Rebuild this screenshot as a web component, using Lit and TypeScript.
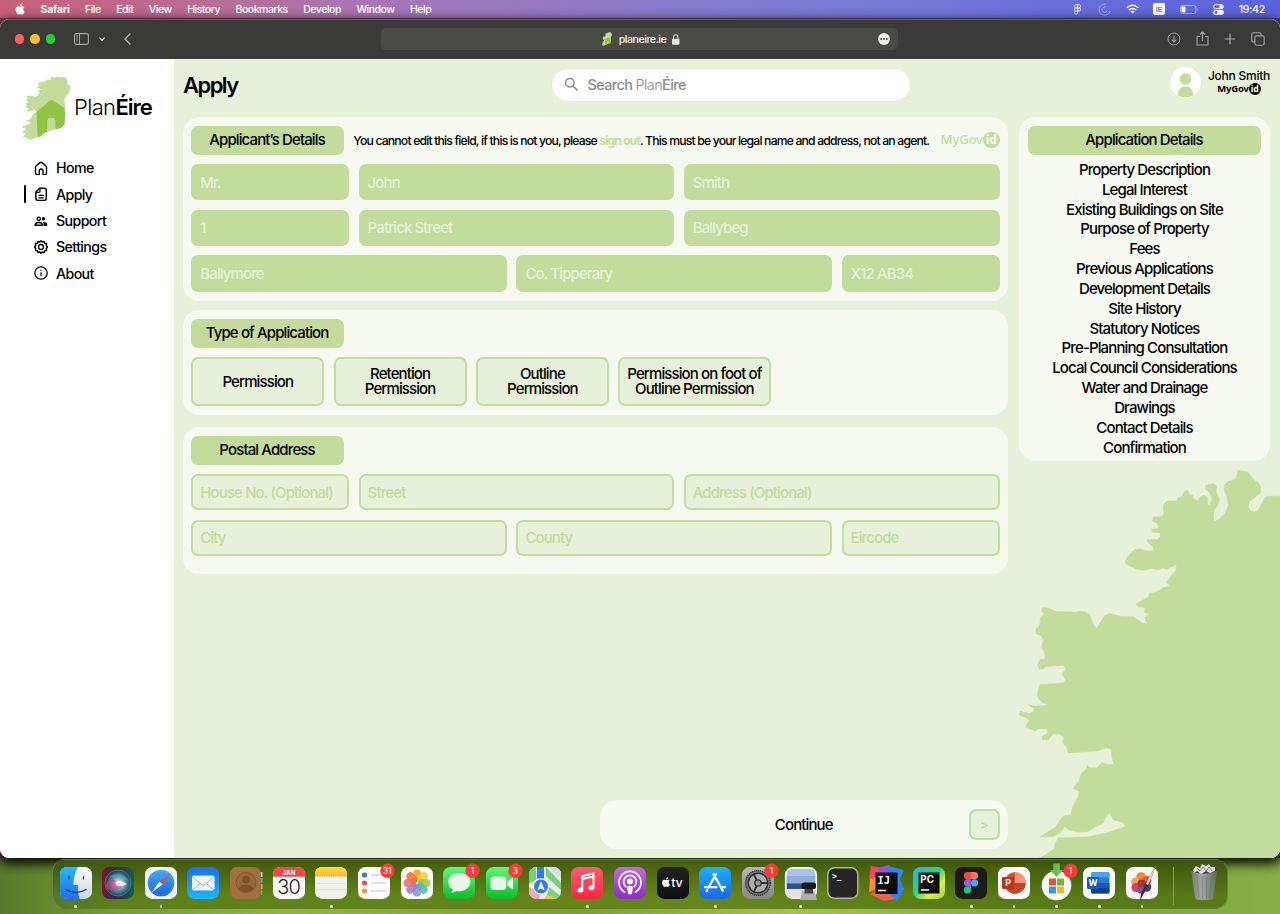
import { LitElement, html, svg, css, nothing } from "lit";
import { customElement } from "lit/decorators.js";
import { classMap } from "lit/directives/class-map.js";

const glyph = (w: number, h: number, body: unknown, box = `0 0 ${w} ${h}`) =>
  html`<svg class="glyph" width=${w} height=${h} viewBox=${box} fill="none">${body}</svg>`;

const applePath =
  "M8.2 2.6C8.7 2 9 1.200 8.900.4 8.200.4 7.400.9 6.900 1.500 6.500 2 6.100 2.800 6.200 3.500 7 3.600 7.700 3.200 8.200 2.600ZM8.900 3.800C7.800 3.700 6.900 4.400 6.300 4.400 5.800 4.400 5 3.800 4.100 3.800 2.900 3.800 1.800 4.500 1.200 5.500 0 7.600.9 10.700 2.100 12.400 2.700 13.200 3.300 14.100 4.200 14.100 5.100 14.100 5.400 13.500 6.400 13.500 7.500 13.500 7.700 14.100 8.600 14.100 9.500 14.100 10.100 13.200 10.700 12.400 11.400 11.500 11.600 10.600 11.700 10.600 11.600 10.600 9.800 9.900 9.800 7.800 9.800 6.100 11.200 5.300 11.300 5.200 10.500 4 9.300 3.900 8.900 3.800Z";

const coast =
  "M810 138L775 138 765 141 758 154 747 176 735 185 722 183 714 170 718 155 735 140 750 128 753 110 745 98 735 92 722 76 712 65 684 60 682 72 675 88 655 93 643 105 643 120 652 140 655 165 645 190 625 208 613 214 609 200 612 180 625 160 627 145 618 125 620 108 610 100 588 104 586 115 600 128 606 145 600 167 593 162 592 140 580 135 570 140 562 152 550 145 548 135 538 133 533 120 522 124 518 138 505 143 500 153 470 152 460 165 462 195 445 200 430 200 427 212 440 218 447 230 440 235 425 237 428 245 450 247 452 258 443 268 410 268 415 278 430 290 430 300 415 303 390 296 375 297 352 320 345 335 350 342 380 356 400 360 425 355 445 358 458 353 470 357 500 342 498 360 470 395 480 408 460 412 440 425 418 430 415 440 378 462 385 468 405 472 404 486 418 490 405 502 410 520 400 520 385 510 370 500 330 498 300 490 285 495 270 518 262 535 250 525 240 495 225 485 208 483 200 486 135 483 115 473 98 472 95 482 103 492 92 500 90 525 78 535 78 550 95 556 100 570 95 590 103 603 107 626 90 628 82 645 88 657 100 655 108 648 160 645 168 655 155 672 168 688 160 698 90 703 82 730 85 745 100 758 122 765 75 768 56 764 72 775 70 785 58 790 30 783 28 793 60 808 48 825 50 832 75 842 85 835 112 836 112 850 97 858 98 868 115 868 130 850 148 850 162 862 157 875 170 890 175 907 260 902 290 892 305 897 305 915 312 942 295 943 275 937 262 953 240 952 232 945 228 958 213 970 208 990 190 1015 208 1022 205 1040 190 1065 182 1093 160 1097 150 1110 140 1128 90 1160 130 1158 150 1148 165 1128 175 1138 205 1145 235 1143 250 1133 280 1118 288 1098 300 1087 310 1108 335 1115 348 1128 300 1145 235 1160 145 1163 135 1180 133 1195 105 1215 85 1224 810 1224Z";

const islandPath =
  "M152 53L163 56 166 52 180 55 190 52 198 60 199 74 206 80 208 90 203 100 196 108 190 118 192 135 192 190 178 203 150 210 128 218 113 228 92 237 85 232 77 234 80 228 68 228 78 218 66 215 80 205 66 200 88 190 90 184 76 182 92 175 98 162 110 155 104 150 84 154 80 150 88 146 76 140 82 136 76 130 86 128 78 120 84 116 78 110 96 108 106 112 112 108 118 98 112 94 126 90 110 84 118 78 112 72 124 68 134 66 142 60 148 64Z";

const island = (w: number, h: number) =>
  glyph(
    w,
    h,
    svg`<path fill="#c3db9b" d=${islandPath}/>
      <path fill="#8fc447" d="M109 155L148 123Q153 119 158 123L188 143Q194 152 192 168L190 192 180 203 164 205 164 182Q163 172 152 172 141 172 140 182L140 212 127 220 122 226 112 229Z"/>`,
    "64 48 148 192",
  );

const navIcons: Record<string, unknown> = {
  Home: svg`<path d="M5.300 13.600H3.200Q1.500 13.600 1.500 12V6.200Q1.500 5.300 2.200 4.700L6 1.600Q7 .8 8 1.600L11.800 4.700Q12.500 5.300 12.500 6.200V12Q12.500 13.600 10.800 13.600H9V9.800Q9 8 7.100 8 5.300 8 5.300 9.800Z" stroke="#000" stroke-width="1.400" stroke-linejoin="round"/>`,
  Apply: svg`<path d="M5.500 1.300H10.200Q12.300 1.300 12.300 3.400V11.300Q12.300 13.400 10.200 13.400H4Q1.900 13.400 1.900 11.300V5Z" stroke="#000" stroke-width="1.500" stroke-linejoin="round"/><path d="M6 1.500V4.200Q6 5.300 4.900 5.300H2M4.500 8.300H9.800M4.500 10.800H9.800" stroke="#000" stroke-width="1.300"/>`,
  Support: svg`<circle cx="4.800" cy="4.800" r="1.700" stroke="#000" stroke-width="1.300"/><circle cx="9.500" cy="4.800" r="1.700" fill="#000"/><path d="M1.300 11.300V10.400Q1.800 8.500 4.800 8.500T8.300 10.400V11.300Z" stroke="#000" stroke-width="1.500"/><path d="M8.800 7.900Q12.800 7.800 13.200 10.300V12H9.600V10.300Q9.600 8.800 8.800 7.900Z" fill="#000"/>`,
  Settings: svg`<path d="M7 .8L8.300 2 10 1.500 10.700 3.200 12.500 3.500 12.300 5.400 13.500 7 12.300 8.500 12.500 10.400 10.700 10.800 10 12.500 8.300 12 7 13.200 5.700 12 4 12.500 3.300 10.800 1.500 10.400 1.700 8.500 .5 7 1.700 5.400 1.500 3.500 3.300 3.200 4 1.500 5.700 2Z" stroke="#000" stroke-width="1.500" stroke-linejoin="round"/><circle cx="7" cy="7" r="2.500" stroke="#000" stroke-width="1.300"/>`,
  About: svg`<circle cx="7" cy="7" r="6.200" stroke="#000" stroke-width="1.300"/><path d="M7 6.200V10.300M7 3.700V5" stroke="#000" stroke-width="1.200"/>`,
};

const tile = (fill: string) => svg`<rect width="32" height="32" rx="7.300" fill=${fill}/>`;
const grad = (id: string, a: string, b: string) =>
  svg`<linearGradient id=${id} x2="0" y2="1"><stop stop-color=${a}/><stop offset="1" stop-color=${b}/></linearGradient>`;

interface DockApp {
  name: string;
  art: unknown;
  open?: boolean;
  badge?: string;
}

const petals = ["#f6a01a", "#e9d02d", "#9ccb4c", "#56b99c", "#6e9fdc", "#a57cc5", "#e06b86", "#f0703c"];

const apps: DockApp[] = [
  {
    name: "Finder",
    open: true,
    art: svg`<defs>${grad("fa", "#27b8fb", "#1f6ff0")}${grad("fb", "#fafbfc", "#cdd6e2")}</defs>${tile("url(#fb)")}
      <path d="M7.300 0H18Q13.500 8 13.300 18H18Q17.800 26 19.500 32H7.300Q0 32 0 24.700V7.300Q0 0 7.300 0Z" fill="url(#fa)"/>
      <path d="M9 9.500V12M23.500 9.500V12M6 22.500Q16 28.500 26 22.500" stroke="#17304f" stroke-width="1.200" stroke-linecap="round"/>`,
  },
  {
    name: "Siri",
    art: svg`<defs><radialGradient id="sa" cx=".52" cy=".52" r=".5"><stop stop-color="#fff"/><stop offset=".3" stop-color="#c3b6dc"/><stop offset=".65" stop-color="#3a8494"/><stop offset="1" stop-color="#2c3a52"/></radialGradient>
      <linearGradient id="sb"><stop stop-color="#7c1637"/><stop offset=".45" stop-color="#30284a"/><stop offset="1" stop-color="#126055"/></linearGradient></defs>${tile("url(#sb)")}
      <circle cx="16" cy="16" r="13" fill="url(#sa)" stroke="#5d8795" stroke-width=".7"/>
      <path d="M4 17Q8 8 16 15T13 23T4 17Z" fill="#d9356f" opacity=".55"/><path d="M7 10Q18 2 27 14Q18 10 7 10Z" fill="#4dd2c1" opacity=".35"/><path d="M13 15Q18 12 25 17Q20 20 15 19Z" fill="#fff" opacity=".8"/>`,
  },
  {
    name: "Safari",
    open: true,
    art: svg`<defs>${grad("sc", "#45a9f5", "#1866d8")}</defs>${tile("#f3f5f8")}<circle cx="16" cy="16" r="13.300" fill="url(#sc)"/>
      <circle cx="16" cy="16" r="11.800" stroke="#b8dbfb" stroke-width=".7" stroke-dasharray=".4 1.400"/>
      <path d="M25.500 6.500L14.500 14.500 17.500 17.500Z" fill="#e9433f"/><path d="M6.500 25.500L14.500 14.500 17.500 17.500Z" fill="#eef3f8"/>`,
  },
  {
    name: "Mail",
    art: svg`<defs>${grad("ma", "#1d6df2", "#19b8fb")}</defs>${tile("url(#ma)")}<rect x="5" y="8.500" width="22.500" height="15" rx="2" fill="#f0f3f7"/>
      <path d="M5.500 9.500L14.500 17.500Q16.200 19 18 17.500L27 9.500M5.500 23L13.200 16.500M27 23L19.300 16.500" stroke="#96a7ba" stroke-width=".8"/>`,
  },
  {
    name: "Contacts",
    art: svg`<path d="M30 5h2.500v5H30z" fill="#c9cfc6"/><path d="M30 11h2.500v5H30z" fill="#48b6a8"/><path d="M30 17h2.500v5H30z" fill="#e2a43c"/><path d="M30 23h2.500v5H30z" fill="#5bb34b"/>
      <rect width="31" height="32" rx="7" fill="#a0713f"/><circle cx="16" cy="15.500" r="10" fill="#966a38" stroke="#7b5327" stroke-width=".8"/><circle cx="16" cy="12.500" r="3.800" fill="#7a5127"/><path d="M8.500 22Q11 17.800 16 17.800T23.500 22Q16 28 8.500 22Z" fill="#7a5127"/>`,
  },
  {
    name: "Calendar",
    art: svg`${tile("#fafafa")}<path d="M0 9.800V7.300Q0 0 7.300 0H24.700Q32 0 32 7.300V9.800Z" fill="#ee4a41"/>
      <text x="16" y="7.900" text-anchor="middle" class="jan">JAN</text><text x="15.700" y="27" text-anchor="middle" class="day">30</text>`,
  },
  {
    name: "Notes",
    open: true,
    art: svg`<defs>${grad("na", "#ffd84a", "#f9c11f")}</defs>${tile("#f2f2ec")}<path d="M0 9V7.300Q0 0 7.300 0H24.700Q32 0 32 7.300V9Z" fill="url(#na)"/>
      <path d="M0 9.700H32" stroke="#b49a50" stroke-width=".6" stroke-dasharray="1 .8"/><path d="M2 16.500H30M2 22.500H30" stroke="#d8d8d2" stroke-width=".6"/>`,
  },
  {
    name: "Reminders",
    badge: "31",
    art: svg`${tile("#fdfdfd")}<circle cx="6.500" cy="8" r="2.600" fill="#3478f6"/><circle cx="6.500" cy="16" r="2.600" fill="#ea4c46"/><circle cx="6.500" cy="24" r="2.600" fill="#f29a38"/>
      <path d="M13 8H28M13 16H28.500M13 24H28.500" stroke="#bcbcbc" stroke-width=".9"/>`,
  },
  {
    name: "Photos",
    art: svg`${tile("#fcfcfa")}${petals.map(
      (c, i) => svg`<rect x="12" y="2.500" width="8" height="12.500" rx="4" fill=${c} opacity=".88" transform="rotate(${i * 45} 16 16)"/>`,
    )}`,
  },
  {
    name: "Messages",
    badge: "1",
    art: svg`<defs>${grad("me", "#5ff777", "#0bbd2a")}</defs>${tile("url(#me)")}<path d="M16.300 6C22.800 6 27.500 10 27.500 15S22.800 24.200 16.300 24.200Q14.800 24.200 13.200 23.900 11 25.600 8.300 25.500 9.800 24.200 9.900 22.500 5.200 19.800 5.200 15C5.200 10 9.800 6 16.300 6Z" fill="#e9f7e8"/>`,
  },
  {
    name: "FaceTime",
    badge: "3",
    art: svg`<defs>${grad("ft", "#5ff777", "#0bbd2a")}</defs>${tile("url(#ft)")}<rect x="4.500" y="9.500" width="15.800" height="13.500" rx="3.500" fill="#eaf8ea"/><path d="M21.500 14.500L26 11Q27 10.500 27 11.500V21.500Q27 22.500 26 22L21.500 18.500Z" fill="#eaf8ea"/>`,
  },
  {
    name: "Maps",
    art: svg`<defs><clipPath id="mp"><rect width="32" height="32" rx="7.300"/></clipPath></defs><g clip-path="url(#mp)"><path d="M0 0H32V32H0Z" fill="#eeece3"/><path d="M0 0H7V13L0 17ZM17 0L32 16V23L17 9Z" fill="#73d27c"/><path d="M20 0L32 12V0Z" fill="#d9dde0"/><path d="M0 20L12 26 10 32H0Z" fill="#f2a6c0"/><path d="M20 20L32 29V32H17Z" fill="#79d17b"/><path d="M17 28L32 32H15Z" fill="#f4cb45"/><path d="M8 0H15V14H8Z" fill="#2f7ff0"/></g>
      <circle cx="12" cy="19.500" r="7.600" fill="#2e7cf0" stroke="#f5f9ff" stroke-width="1.200"/><path d="M12 14L15.700 23.500 12 21.500 8.300 23.500Z" fill="#fff"/>`,
  },
  {
    name: "Music",
    open: true,
    art: svg`<defs>${grad("mu", "#fb5b71", "#fa2742")}</defs>${tile("url(#mu)")}<path d="M11.300 22.500V9L22.500 6.500V20.500M11.300 12L22.500 9.500" stroke="#fff" stroke-width="2"/><ellipse cx="9.300" cy="23" rx="3" ry="2.500" fill="#fff"/><ellipse cx="20.500" cy="20.800" rx="3" ry="2.500" fill="#fff"/>`,
  },
  {
    name: "Podcasts",
    art: svg`<defs>${grad("po", "#c268e2", "#8a2fc4")}</defs>${tile("url(#po)")}<g stroke="#fff" stroke-width="1.700" stroke-linecap="round"><path d="M10.500 25A11 11 0 1 1 21.500 25"/><path d="M11.800 19.600A6.400 6.400 0 1 1 20.200 19.600"/></g><circle cx="16" cy="14.500" r="2.900" fill="#fff"/><path d="M13 20Q16 17.500 19 20L18 26.500Q16 28.500 14 26.500Z" fill="#fff"/>`,
  },
  {
    name: "TV",
    art: svg`<defs>${grad("tv", "#1f2321", "#0d100f")}</defs>${tile("url(#tv)")}<path transform="translate(4.600 9.900) scale(.72)" fill="#fff" d=${applePath}/><text x="14.300" y="20" class="tv">tv</text>`,
  },
  {
    name: "App Store",
    open: true,
    art: svg`<defs>${grad("as", "#1cb0f8", "#1b67ea")}</defs>${tile("url(#as)")}<g stroke="#fff" stroke-width="2.300" stroke-linecap="round"><path d="M17.300 7L9.300 20.500M14.500 7L23.700 23.500M6 20.200H17.500M22.500 20.200H26M8.200 23.200L7.800 24"/></g>`,
  },
  {
    name: "System Settings",
    badge: "1",
    art: svg`<defs>${grad("ss", "#b4b7b4", "#858884")}</defs>${tile("url(#ss)")}<circle cx="16" cy="16" r="12.400" fill="#777a78" stroke="#30332f" stroke-width="1.400" stroke-dasharray="1.300 .7"/><circle cx="16" cy="16" r="9.800" fill="#adafad" stroke="#2d302d" stroke-width="1.400"/><path d="M16 16L12 7.500M16 16H25.500M16 16L12 24.500" stroke="#2d302d" stroke-width="1.800"/><circle cx="16" cy="16" r="3.200" fill="#959895" stroke="#2d302d" stroke-width="1.300"/>`,
  },
  {
    name: "Preview",
    open: true,
    art: svg`<rect x=".8" y=".8" width="30.400" height="30.400" rx="7" fill="#a9c3ea" stroke="#f4f4f2" stroke-width="1.800"/><path d="M1.800 9H30.200V17H1.800Z" fill="#8faede"/><path d="M1.800 16.500H30.200V22H1.800Z" fill="#2c5285"/><path d="M1.800 22H30.200V25Q30 30.200 25 30.200H7Q2 30 1.800 25Z" fill="#e4e2dc"/>
      <path d="M17 24H29.500L32 33H15Z" fill="#aeb0ae"/><rect x="16.500" y="15.500" width="14.500" height="6.500" rx="2.500" fill="#17181a"/><path d="M19.500 22H28V26.500H19.500Z" fill="#3f4244"/>`,
  },
  {
    name: "Terminal",
    art: svg`<rect x=".8" y=".8" width="30" height="30.400" rx="6.500" fill="#242626" stroke="#aeb3a8" stroke-width="1.500"/><text x="5" y="11.500" class="term">&gt;_</text>`,
  },
  {
    name: "IntelliJ IDEA",
    art: svg`<path d="M1-1L14 1 12 16 0 26 3 16-1 12Z" fill="#f8465f"/><path d="M8 1L19-2 30 12 20 28 10 30Z" fill="#b04bd4"/><path d="M18-1L34 3 30 12 34 22 27 34 18 27Z" fill="#2c83f5"/><path d="M0 27L12 20 25 32 14 34Z" fill="#f4614a"/><path d="M0 12L7 10V22L-1 25Z" fill="#fa8d33"/><path d="M5.500 5.500H27.500V27H5.500Z" fill="#0b0b0d"/><text x="7.500" y="16.500" class="ij">IJ</text><path d="M8 23.500H16" stroke="#fff" stroke-width="1.600"/>`,
  },
  {
    name: "PyCharm",
    art: svg`<defs><linearGradient id="pc" y2="1"><stop stop-color="#1fb7e8"/><stop offset=".45" stop-color="#29d287"/><stop offset=".7" stop-color="#e6ec41"/><stop offset="1" stop-color="#8ada50"/></linearGradient></defs>${tile("url(#pc)")}<path d="M5.500 5.500H26.500V26.500H5.500Z" fill="#0c0d0c"/><text x="7.300" y="16.300" class="pc">PC</text><path d="M8 23H16" stroke="#fff" stroke-width="1.500"/>`,
  },
  {
    name: "Figma",
    open: true,
    art: svg`${tile("#1c1b1a")}<path d="M16 5H12.500A3.600 3.600 0 0 0 12.500 12.200H16Z" fill="#f0502c"/><path d="M16 5H19.500A3.600 3.600 0 0 1 19.500 12.200H16Z" fill="#fb7265"/><path d="M16 12.200H12.500A3.600 3.600 0 0 0 12.500 19.400H16Z" fill="#9a58f6"/><circle cx="19.600" cy="15.800" r="3.600" fill="#28b6f7"/><path d="M16 19.400H12.500A3.600 3.600 0 1 0 16 23Z" fill="#17cb83"/>`,
  },
  {
    name: "PowerPoint",
    open: true,
    art: svg`${tile("#fbfaf8")}<circle cx="17" cy="16" r="10.700" fill="#d35230"/><path d="M17 5.300A10.700 10.700 0 0 1 27.700 16H17Z" fill="#ff9478"/><path d="M6.300 16H27.700A10.700 10.700 0 0 1 6.300 16Z" fill="#c3411f" opacity=".8"/><rect x="4" y="10" width="12" height="12" rx="1.300" fill="#b93519"/><text x="10" y="19.300" text-anchor="middle" class="ms">P</text>`,
  },
  {
    name: "Microsoft AutoUpdate",
    open: true,
    badge: "1",
    art: svg`<circle cx="15.500" cy="18.500" r="14.800" fill="#fbfbfa"/><path d="M8 11.500H15V18.500H8Z" fill="#ee5030"/><path d="M16 11.500H23V18.500H16Z" fill="#7db728"/><path d="M8 19.500H15V26.500H8Z" fill="#23a3ea"/><path d="M16 19.500H23V26.500H16Z" fill="#fbb826"/><path d="M12.300-3.500H18.800V3H22L15.500 10 9 3H12.300Z" fill="#6dbb58"/>`,
  },
  {
    name: "Word",
    open: true,
    art: svg`${tile("#fbfbfb")}<rect x="8" y="5" width="18.500" height="21.500" rx="1.500" fill="#2b7cd3"/><path d="M8 6.500Q8 5 9.500 5H25Q26.500 5 26.500 6.500V10.500H8Z" fill="#41a5ee"/><path d="M8 16H26.500V21H8Z" fill="#185abd"/><path d="M8 21H26.500V25Q26.500 26.500 25 26.500H9.500Q8 26.500 8 25Z" fill="#103f91"/><rect x="4" y="10" width="12" height="12" rx="1.300" fill="#1c58b4"/><text x="10" y="19.200" text-anchor="middle" class="ms">W</text>`,
  },
  {
    name: "Pixelmator Pro",
    open: true,
    art: svg`${tile("#f5f4f6")}<circle cx="15" cy="10" r="4.800" fill="#f5862a"/><circle cx="21" cy="13.500" r="4.500" fill="#e4552f"/><circle cx="9.500" cy="15" r="4.300" fill="#f0a24d"/><circle cx="10" cy="20.500" r="4.600" fill="#d34460"/><circle cx="20.500" cy="20" r="4.800" fill="#39456f"/><circle cx="15" cy="22.500" r="4.300" fill="#8a4b9d"/><circle cx="15.500" cy="16.500" r="4" fill="#9f3240"/>
      <path d="M30-1L24 14 17 28 14 34 15 27 22 12Z" fill="#2c2b31"/><path d="M30-1L24 14 22 18 20 17 22 12Z" fill="#d8d9dc"/>`,
  },
];

@customElement("mygov-mark")
export class MyGovMark extends LitElement {
  static styles = css`
    :host {
      display: inline-flex;
      align-items: center;
      font-family: "Noto Sans", "Open Sans", sans-serif;
      font-weight: 600;
      line-height: 1;
    }
    .disc {
      width: 1.27em;
      height: 1.27em;
      border-radius: 50%;
      background: currentColor;
      display: grid;
      place-items: center;
    }
    .id {
      color: var(--knock, #e7f1da);
      font-weight: 800;
      font-size: 0.92em;
      letter-spacing: -0.02em;
    }
  `;
  render() {
    return html`<span>MyGov</span><span class="disc"><span class="id">id</span></span>`;
  }
}

@customElement("mac-menubar")
export class MacMenubar extends LitElement {
  static styles = css`
    :host {
      display: flex;
      justify-content: space-between;
      align-items: center;
      box-sizing: border-box;
      height: 18px;
      padding: 0 15px;
      color: #fff;
      font: 500 10.600px Inter, sans-serif;
      background: linear-gradient(90deg, #c8607a, #b96d97 17%, #a776b6 29%, #8b7cca 50%, #767ad7 70%, #666edc 85%, #5a62dd);
    }
    .menus,
    .status {
      display: flex;
      align-items: center;
    }
    .menus {
      gap: 15.500px;
      letter-spacing: -0.530px;
    }
    .app {
      font-weight: 700;
      letter-spacing: -0.250px;
    }
    .status {
      gap: 14.500px;
      letter-spacing: -0.300px;
    }
    .status .glyph:first-child {
      margin-right: 3px;
    }
    .glyph {
      display: block;
    }
    .ie {
      font: 700 7px "Liberation Sans", sans-serif;
      letter-spacing: 0;
    }
  `;
  render() {
    return html`
      <div class="menus">
        ${glyph(10, 12, svg`<path fill="#fff" d=${applePath}/>`, "0 0 12 14.500")}
        <span class="app">Safari</span>
        ${["File", "Edit", "View", "History", "Bookmarks", "Develop", "Window", "Help"].map((m) => html`<span>${m}</span>`)}
      </div>
      <div class="status">
        ${glyph(7, 11, svg`<g stroke="#e9e9fb" stroke-width=".9"><path d="M3.500.6V8.800A1.500 1.500 0 1 1 2 7.200H5.500M3.500.6H2A1.600 1.600 0 0 0 2 3.900H5A1.600 1.600 0 0 0 5 .6H3.500M3.500 3.900H2A1.600 1.600 0 0 0 2 7.200"/><circle cx="5.200" cy="5.500" r="1.500"/></g>`)}
        ${glyph(13, 13, svg`<g stroke="#a3aaf0" stroke-width="1" stroke-linecap="round"><path d="M7 1A5.600 5.600 0 1 0 12 8.500M7.500 3.800A2.900 2.900 0 1 0 9 8.500"/></g>`)}
        ${glyph(13, 10, svg`<g stroke="#fff" stroke-width="1.500"><path d="M.8 3.700Q6.500-1.300 12.200 3.700M2.800 6Q6.500 2.900 10.200 6"/></g><path d="M4.500 7.500Q6.500 6 8.500 7.500L6.500 9.600Z" fill="#fff"/>`)}
        ${glyph(12, 12, svg`<rect width="12" height="12" rx="2" fill="#fff"/><text x="6" y="8.600" text-anchor="middle" class="ie" fill="#6d71cf">IE</text>`)}
        ${glyph(19, 9, svg`<rect x=".5" y=".5" width="15.500" height="8" rx="2.300" stroke="#b1b4ef"/><rect x="1.500" y="1.500" width="4" height="6" rx="1" fill="#fff"/><path d="M17.200 3.200V5.800Q18.500 4.500 17.200 3.200Z" fill="#b1b4ef"/>`)}
        ${glyph(11, 11, svg`<rect x=".6" y=".7" width="9.800" height="4" rx="2" stroke="#fff" stroke-width="1"/><circle cx="8" cy="2.700" r="1.700" fill="#fff"/><rect y="6.100" width="11" height="4.800" rx="2.400" fill="#fff"/><circle cx="3" cy="8.500" r="1.400" fill="#666edc"/>`)}
        <span>19:42</span>
      </div>
    `;
  }
}

@customElement("safari-toolbar")
export class SafariToolbar extends LitElement {
  static styles = css`
    :host {
      display: grid;
      grid-template-columns: 381px 517px 1fr;
      align-items: center;
      height: 40px;
      background: #3a3b39;
      border-radius: 9px 9px 0 0;
      box-shadow: inset 0 1px 0 #63625f;
      box-sizing: border-box;
    }
    .glyph {
      display: block;
    }
    .left {
      display: flex;
      align-items: center;
      padding-left: 15px;
    }
    .dot {
      width: 9.400px;
      height: 9.400px;
      margin-right: 6px;
      border-radius: 50%;
      background: #fe5f57;
    }
    .dot.min {
      background: #febc2e;
    }
    .dot.max {
      background: #28c840;
      margin-right: 19px;
    }
    .caret {
      margin: 0 19.500px 0 9.500px;
    }
    .address {
      height: 22px;
      border-radius: 5px;
      background: #4a4a47;
      display: grid;
      grid-template-columns: 1fr auto 1fr;
      align-items: center;
      color: #f2f2f0;
      font: 500 10.700px Inter, sans-serif;
      letter-spacing: -0.500px;
    }
    .site {
      display: flex;
      align-items: center;
      gap: 6px;
      padding-left: 2px;
    }
    .more {
      justify-self: end;
      margin-right: 8px;
    }
    .right {
      display: flex;
      align-items: center;
      justify-content: flex-end;
      gap: 15px;
      padding: 0 15.500px 1px 0;
    }
  `;
  render() {
    return html`
      <div class="left">
        <i class="dot"></i><i class="dot min"></i><i class="dot max"></i>
        ${glyph(15, 12, svg`<rect x=".6" y=".6" width="13.800" height="10.800" rx="1.800" stroke="#a9a9a6" stroke-width="1.100"/><path d="M5.500.8V11.200M2.200 3H4M2.200 5H4M2.200 7H4" stroke="#a9a9a6" stroke-width=".9"/>`)}
        <span class="caret">${glyph(6, 5, svg`<path d="M.8 1L3 3.400 5.200 1" stroke="#d8d8d5" stroke-width="1.200" stroke-linecap="round"/>`)}</span>
        ${glyph(7, 12, svg`<path d="M6 1L1 6 6 11" stroke="#b5b5b2" stroke-width="1.300" stroke-linecap="round"/>`)}
      </div>
      <div class="address">
        <span></span>
        <span class="site">${island(12, 14)}<span>planeire.ie</span>${glyph(8, 11, svg`<rect y="4.700" width="7.500" height="6" rx="1" fill="#e3e3e0"/><path d="M1.600 5V3.200Q1.600.8 3.750.8T5.900 3.200V5" stroke="#d0d0cd" stroke-width="1.100"/>`)}</span>
        <span class="more">${glyph(12, 12, svg`<circle cx="6" cy="6" r="5.900" fill="#ececea"/><g fill="#3c3c3a"><circle cx="3.200" cy="6" r=".9"/><circle cx="6" cy="6" r=".9"/><circle cx="8.800" cy="6" r=".9"/></g>`)}</span>
      </div>
      <div class="right">
        ${glyph(14, 14, svg`<circle cx="7" cy="7" r="6" stroke="#a3a3a0"/><path d="M7 3.800V9.800M4.700 7.600L7 9.900 9.300 7.600" stroke="#a3a3a0" stroke-width="1.100"/>`)}
        ${glyph(13, 15, svg`<path d="M4 5.500H1V14H12V5.500H9M6.500 10V1.200M4 3.500L6.500 1 9 3.500" stroke="#a3a3a0" stroke-width="1.100" stroke-linejoin="round"/>`)}
        ${glyph(12, 12, svg`<path d="M6 .8V11.200M.8 6H11.200" stroke="#adadaa" stroke-width="1.200"/>`)}
        ${glyph(14, 14, svg`<path d="M3.800 10H2.300Q.8 10 .8 8.500V2.300Q.8.8 2.300.8H8.500Q10 .8 10 2.300V3.800" stroke="#a3a3a0" stroke-width="1.100"/><rect x="3.900" y="3.900" width="9.300" height="9.300" rx="1.600" stroke="#a3a3a0" stroke-width="1.100"/>`)}
      </div>
    `;
  }
}

@customElement("mac-dock")
export class MacDock extends LitElement {
  static styles = css`
    :host {
      display: flex;
      justify-content: space-between;
      box-sizing: border-box;
      width: 1176px;
      height: 50px;
      margin-left: 52px;
      padding: 6.500px 7.500px 0 6.500px;
      border-radius: 13px;
      border: 1px solid rgba(150, 180, 90, 0.4);
      border-top-color: rgba(150, 180, 90, 0.15);
      background:
        linear-gradient(180deg, rgba(30, 40, 0, 0.45), rgba(60, 90, 0, 0) 75%),
        linear-gradient(90deg, #54782f, #5d8119 6%, #66871b 55%, #587c12 80%, #58791a);
    }
    .apps {
      display: flex;
      gap: 10.660px;
    }
    .slot {
      width: 32px;
      display: flex;
      flex-direction: column;
      align-items: center;
      gap: 6.800px;
    }
    .art {
      width: 32px;
      height: 32px;
      overflow: visible;
      display: block;
      fill: none;
    }
    .running {
      width: 2.600px;
      height: 2.600px;
      border-radius: 50%;
      background: #d3e6a4;
    }
    .tail {
      display: flex;
      gap: 14px;
    }
    .rule {
      width: 1px;
      height: 38px;
      background: #8ba352;
    }
    text {
      fill: #fff;
      font-family: Inter, sans-serif;
    }
    .badge {
      font-size: 8.500px;
    }
    .jan {
      font-size: 6.200px;
      font-weight: 700;
    }
    .day {
      font-size: 20px;
      font-weight: 300;
      fill: #222;
      letter-spacing: -0.8px;
    }
    .tv {
      font-size: 12.500px;
      font-weight: 500;
      letter-spacing: -0.300px;
    }
    .term {
      font: 700 8px "DejaVu Sans Mono", monospace;
    }
    .ij {
      font: 700 10.500px "DejaVu Sans Mono", monospace;
    }
    .pc {
      font-size: 9.800px;
      font-weight: 700;
    }
    .ms {
      font-size: 8.800px;
      font-weight: 700;
    }
  `;
  render() {
    return html`
      <div class="apps">
        ${apps.map(
          (a) => html`<div class="slot">
            <svg class="art" viewBox="0 0 32 32" role="img" aria-label=${a.name}>
              ${a.art}
              ${a.badge
                ? svg`<circle cx="29.500" cy="3.800" r="7.200" fill="#f53d36"/><text x="29.400" y="6.900" text-anchor="middle" class="badge">${a.badge}</text>`
                : nothing}
            </svg>
            ${a.open ? html`<i class="running"></i>` : nothing}
          </div>`,
        )}
      </div>
      <div class="tail">
        <i class="rule"></i>
        <svg class="art" viewBox="0 0 32 32" role="img" aria-label="Trash">
          <defs><linearGradient id="tr"><stop stop-color="#777c7c"/><stop offset=".4" stop-color="#a9adad"/><stop offset="1" stop-color="#656a6a"/></linearGradient></defs>
          <path d="M3 2.500H29L25.500 30Q25 33 22 33H10.500Q7.500 33 7 30Z" fill="url(#tr)" opacity=".9"/>
          <ellipse cx="16" cy="3" rx="13" ry="3.500" fill="#3c4040"/>
          <path d="M5 3L8-1 12 1 14-3 18-1 21-3 23 0 27 0 27 4 22 6 18 4 13 7 9 4 6 6Z" fill="#dcdedb"/>
          <path d="M9 1L12 4 15 0 18 4 21 0 24 4" stroke="#777c7a" stroke-width=".9"/>
          <path d="M9 9L11 30M14 10L14.500 31M19 10L18.500 31M24 9L21.500 30" stroke="#565b5b" stroke-width=".6" opacity=".6"/>
        </svg>
      </div>
    `;
  }
}

@customElement("app-sidebar")
export class AppSidebar extends LitElement {
  static styles = css`
    :host {
      display: block;
      background: #fff;
      color: #000;
      font-family: Inter, sans-serif;
    }
    .glyph {
      display: block;
    }
    .brand {
      display: flex;
      align-items: center;
      gap: 2px;
      padding: 16px 0 0 21px;
    }
    .name {
      font-size: 22px;
      font-weight: 300;
      letter-spacing: -0.650px;
      padding-bottom: 3px;
    }
    .name b {
      font-weight: 600;
      letter-spacing: -1px;
    }
    nav {
      display: flex;
      flex-direction: column;
      margin: 13.800px 0 0 24px;
    }
    .item {
      display: flex;
      align-items: center;
      gap: 8px;
      height: 26.300px;
      padding-left: 8.500px;
      border-left: 2px solid transparent;
      font-size: 14.200px;
      font-weight: 450;
      letter-spacing: -0.600px;
    }
    .marker {
      width: 2px;
      height: 17.500px;
      margin-left: -10.500px;
      background: transparent;
      border-radius: 1px;
    }
    .current .marker {
      background: #000;
    }
  `;
  render() {
    return html`
      <div class="brand">${island(51, 66)}<span class="name">Plan<b>Éire</b></span></div>
      <nav>
        ${Object.entries(navIcons).map(
          ([label, icon]) => html`<a class=${classMap({ item: true, current: label === "Apply" })}><i class="marker"></i>${glyph(14, 14, icon)}<span>${label}</span></a>`,
        )}
      </nav>
    `;
  }
}

@customElement("apply-page")
export class ApplyPage extends LitElement {
  static styles = css`
    :host {
      display: grid;
      grid-template-columns: 836px 270px;
      background: #e7f1da;
      color: #000;
      font: 450 15px Inter, sans-serif;
      letter-spacing: -0.880px;
      min-width: 0;
    }
    .glyph {
      display: block;
    }
    .main {
      display: flex;
      flex-direction: column;
      padding: 0 2px 9px 9px;
    }
    .top {
      display: grid;
      grid-template-columns: 368px 360px;
      align-items: center;
      height: 51px;
      margin-bottom: 7px;
    }
    h1 {
      margin: 0;
      font-size: 22px;
      font-weight: 600;
      letter-spacing: -1.550px;
    }
    .search {
      display: flex;
      align-items: center;
      gap: 8.500px;
      height: 32px;
      padding-left: 12px;
      border: 1px solid #dcead0;
      border-radius: 17px;
      background: #fff;
      width: 346px;
      color: #8b8d8a;
      font-size: 14.400px;
      letter-spacing: -0.580px;
    }
    .search i {
      font-style: normal;
      font-weight: 300;
    }
    .card {
      box-sizing: border-box;
      border-radius: 16px;
      background: #f5f9f0;
      padding: 8.500px 8.500px 0 8.300px;
    }
    .card.people {
      height: 184px;
      margin-bottom: 9px;
    }
    .card.kind {
      height: 105px;
      margin-bottom: 12px;
    }
    .card.postal {
      height: 147px;
    }
    .head {
      display: flex;
      align-items: center;
      margin-bottom: 9.500px;
    }
    .chip {
      box-sizing: border-box;
      flex: none;
      width: 152.500px;
      height: 29px;
      padding: 0 1px 1px 0;
      border-radius: 7px;
      background: #c3db9b;
      display: grid;
      place-items: center;
    }
    .note {
      margin-left: 9.500px;
      font-size: 12.200px;
      letter-spacing: -0.820px;
      white-space: nowrap;
    }
    .note b {
      font-weight: 600;
      color: #c3db9b;
    }
    .head mygov-mark {
      margin-left: auto;
      font-size: 13.100px;
      font-weight: 500;
      letter-spacing: -0.150px;
      color: #c3db9b;
      --knock: #f5f9f0;
    }
    .row {
      display: grid;
      grid-template-columns: 158px 1fr 1fr;
      gap: 9.300px;
      margin-bottom: 9.300px;
    }
    .row.late {
      grid-template-columns: 1fr 1fr 158px;
    }
    .field {
      box-sizing: border-box;
      height: 36.400px;
      padding-left: 7px;
      border: 2px solid #c3db9b;
      border-radius: 7px;
      display: flex;
      align-items: center;
      color: #c3db9b;
      background: #e7f1da;
    }
    .field.locked {
      background: #c3db9b;
      color: #e7f1da;
    }
    .kinds {
      display: flex;
      gap: 9.300px;
    }
    .choice {
      box-sizing: border-box;
      width: 133px;
      height: 48.500px;
      border: 2px solid #c3db9b;
      border-radius: 7px;
      background: #e7f1da;
      display: grid;
      place-items: center;
      text-align: center;
      line-height: 15.500px;
      white-space: pre;
    }
    .choice.wide {
      width: 152.500px;
    }
    .continue {
      box-sizing: border-box;
      align-self: flex-end;
      display: grid;
      grid-template-columns: 31px 1fr 31px;
      align-items: center;
      width: 408.500px;
      height: 49px;
      margin-top: auto;
      padding: 0 8.500px;
      border-radius: 17px;
      background: #f5f9f0;
      text-align: center;
    }
    .go {
      box-sizing: border-box;
      height: 31px;
      border: 2px solid #c3db9b;
      border-radius: 7px;
      background: #e7f1da;
      color: #c3db9b;
      display: grid;
      place-items: center;
      font-size: 13px;
    }
    .side {
      display: flex;
      flex-direction: column;
    }
    .user {
      display: flex;
      align-items: center;
      justify-content: flex-end;
      gap: 6.500px;
      height: 51px;
      margin-bottom: 7px;
      box-sizing: border-box;
      padding: 0 10px 5px 0;
    }
    .who {
      display: flex;
      flex-direction: column;
      align-items: center;
      font-size: 12px;
      letter-spacing: -0.250px;
      line-height: 14px;
    }
    .who mygov-mark {
      font-size: 9.500px;
      font-weight: 700;
      letter-spacing: -0.200px;
    }
    .toc {
      box-sizing: border-box;
      width: 251px;
      height: 344px;
      margin-left: 9px;
      padding: 8.500px 9px 0;
      border-radius: 16px;
      background: #f5f9f0;
      text-align: center;
    }
    .toc .chip {
      width: auto;
      margin-bottom: 5.500px;
    }
    .step {
      line-height: 19.830px;
    }
  `;

  private field(label: string, locked: boolean) {
    return html`<div class=${classMap({ field: true, locked })}>${label}</div>`;
  }

  render() {
    const steps = [
      "Property Description", "Legal Interest", "Existing Buildings on Site", "Purpose of Property", "Fees",
      "Previous Applications", "Development Details", "Site History", "Statutory Notices", "Pre-Planning Consultation",
      "Local Council Considerations", "Water and Drainage", "Drawings", "Contact Details", "Confirmation",
    ];
    const kinds = ["Permission", "Retention\nPermission", "Outline\nPermission", "Permission on foot of\nOutline Permission"];
    return html`
      <section class="main">
        <header class="top">
          <h1>Apply</h1>
          <div class="search">
            ${glyph(15, 15, svg`<circle cx="5.800" cy="5.800" r="4.300" stroke="#8b8d8a" stroke-width="1.500"/><path d="M9 9L13.500 13.500" stroke="#8b8d8a" stroke-width="1.700"/>`)}
            <span>Search <i>Plan</i>Éire</span>
          </div>
        </header>
        <div class="card people">
          <div class="head">
            <span class="chip">Applicant’s Details</span>
            <span class="note">You cannot edit this field, if this is not you, please <b>sign out</b>. This must be your legal name and address, not an agent.</span>
            <mygov-mark></mygov-mark>
          </div>
          <div class="row">${["Mr.", "John", "Smith"].map((t) => this.field(t, true))}</div>
          <div class="row">${["1", "Patrick Street", "Ballybeg"].map((t) => this.field(t, true))}</div>
          <div class="row late">${["Ballymore", "Co. Tipperary", "X12 AB34"].map((t) => this.field(t, true))}</div>
        </div>
        <div class="card kind">
          <div class="head"><span class="chip">Type of Application</span></div>
          <div class="kinds">${kinds.map((k, i) => html`<div class=${classMap({ choice: true, wide: i === 3 })}>${k}</div>`)}</div>
        </div>
        <div class="card postal">
          <div class="head"><span class="chip">Postal Address</span></div>
          <div class="row">${["House No. (Optional)", "Street", "Address (Optional)"].map((t) => this.field(t, false))}</div>
          <div class="row late">${["City", "County", "Eircode"].map((t) => this.field(t, false))}</div>
        </div>
        <div class="continue"><span></span><span>Continue</span><span class="go">&gt;</span></div>
      </section>
      <aside class="side">
        <div class="user">
          ${glyph(31, 31, svg`<circle cx="15.500" cy="15.500" r="15.300" fill="#fff"/><circle cx="15.500" cy="12" r="5.800" fill="#c3db9b"/><path d="M8 28.500Q8 19.500 15.500 19.500T23 28.500Q19.500 30.600 15.500 30.600T8 28.500Z" fill="#c3db9b"/>`)}
          <div class="who"><span>John Smith</span><mygov-mark></mygov-mark></div>
        </div>
        <div class="toc">
          <div class="chip">Application Details</div>
          ${steps.map((s) => html`<div class="step">${s}</div>`)}
        </div>
        ${glyph(270, 397, svg`<path fill="#c3db9b" stroke="#c3db9b" stroke-width="2" stroke-linejoin="round" d=${coast}/>`, "0 32 810 1191")}
      </aside>
    `;
  }
}

@customElement("app-root")
export class AppRoot extends LitElement {
  static styles = css`
    :host {
      display: flex;
      flex-direction: column;
      width: 1280px;
      height: 914px;
      overflow: hidden;
      background:
        linear-gradient(90deg, #57792d, #6f9a30 8%, #8fb83a 22%, #7ca02b 45%, #a3c545 62%, #7fa436 85%, #86ae4a) 0 100% / 100% 56px no-repeat,
        linear-gradient(90deg, #8a3c55, #4c4788);
    }
    .window {
      height: 839px;
      flex: none;
      margin-top: 1px;
      border-radius: 9px;
      overflow: hidden;
      background: #fff;
      box-shadow: 0 4px 12px 2px rgba(0, 0, 0, 0.95);
      display: flex;
      flex-direction: column;
    }
    .page {
      flex: 1;
      display: grid;
      grid-template-columns: 174px 1106px;
      min-height: 0;
    }
    mac-menubar,
    safari-toolbar {
      flex: none;
    }
    mac-dock {
      margin-top: 1px;
      flex: none;
      z-index: 1;
    }
  `;
  render() {
    return html`
      <mac-menubar></mac-menubar>
      <div class="window">
        <safari-toolbar></safari-toolbar>
        <div class="page">
          <app-sidebar></app-sidebar>
          <apply-page></apply-page>
        </div>
      </div>
      <mac-dock></mac-dock>
    `;
  }
}
